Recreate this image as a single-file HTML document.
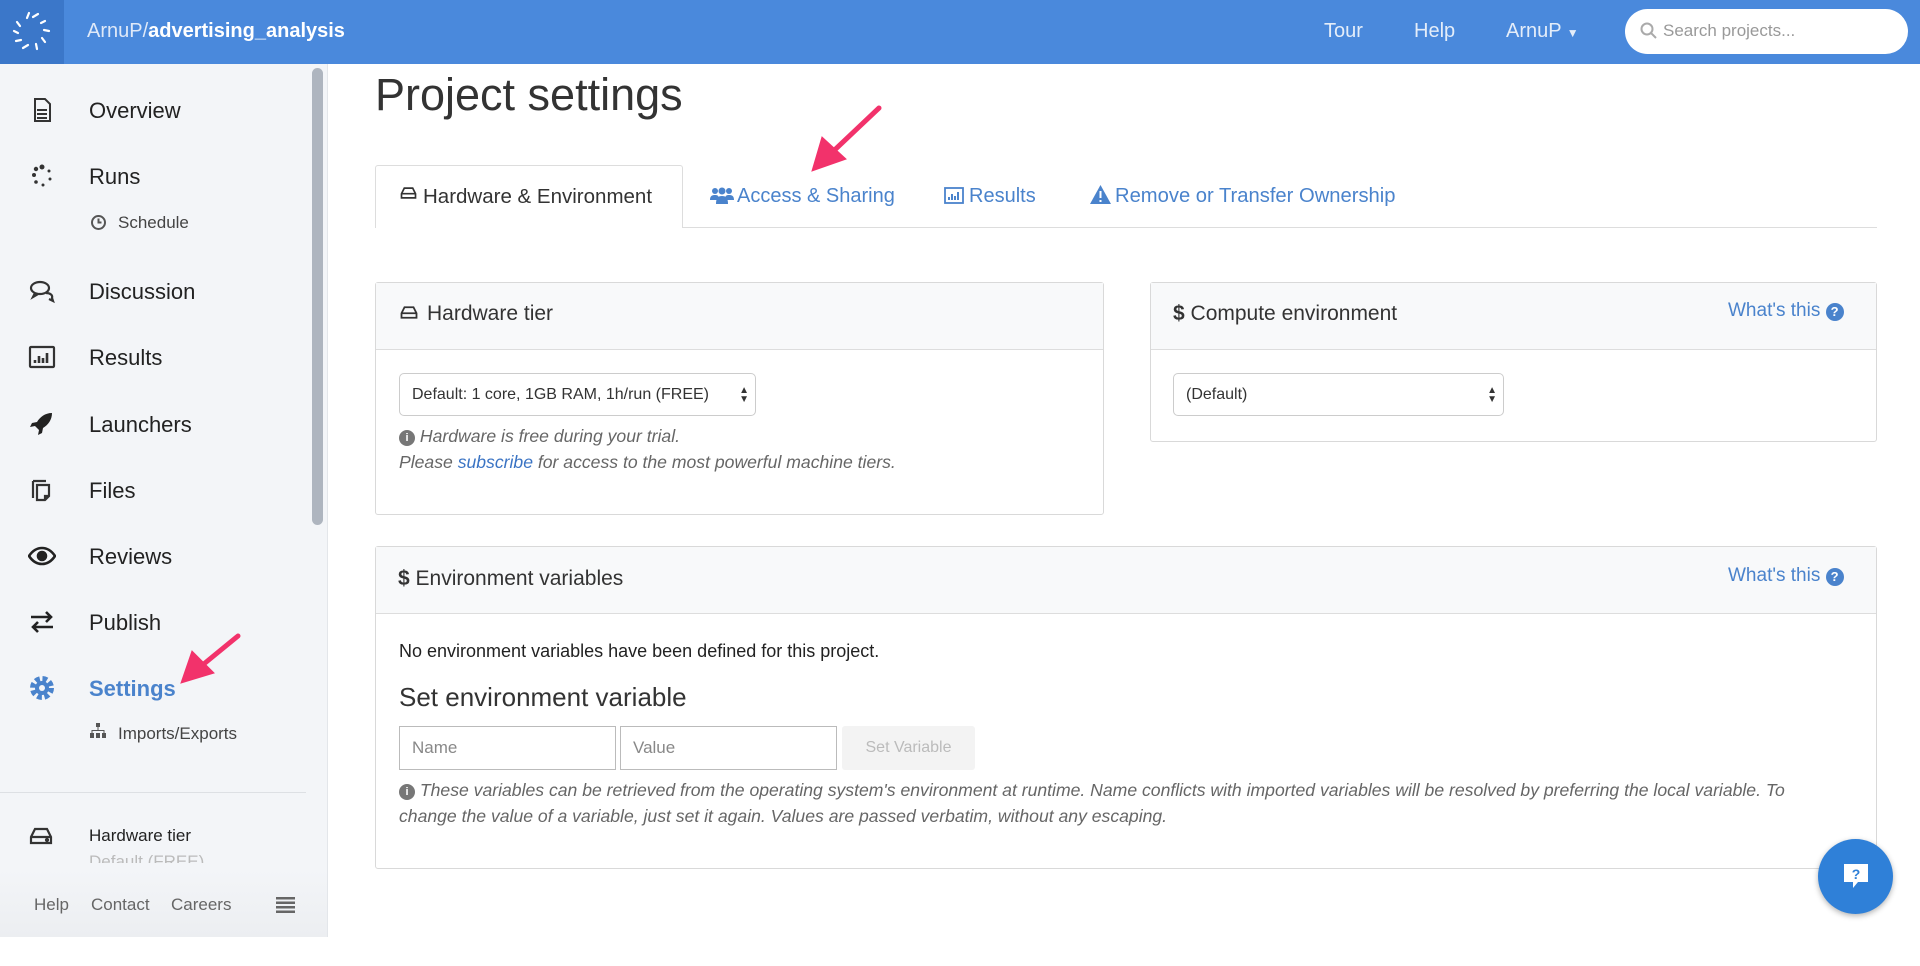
<!DOCTYPE html>
<html><head><meta charset="utf-8"><style>
*{box-sizing:border-box;margin:0;padding:0}
body{width:1920px;height:966px;position:relative;background:#fff;font-family:"Liberation Sans",sans-serif;overflow:hidden;color:#333}
.a{position:absolute;white-space:nowrap}
.hdr{left:0;top:0;width:1920px;height:64px;background:#4a89dc}
.logo{left:0;top:0;width:64px;height:64px;background:#3b77c9}
.side{left:0;top:64px;width:328px;height:873px;background:#f3f5f8;border-right:1px solid #e3e6ea}
.nav{left:89px;font-size:22px;color:#222;transform:translateY(-50%)}
.ic{left:28px;width:28px;height:28px;transform:translateY(-50%)}
.panel{border:1px solid #d9d9d9;border-radius:3px;background:#fff}
.ph{background:#f8f9fa;border-bottom:1px solid #ddd}
.blue{color:#4a83cc}
.sel{border:1px solid #ccc;border-radius:5px;background:#fff;font-size:16px;color:#333;padding-left:12px;line-height:42px}
.note{font-style:italic;font-size:17.6px;color:#666}
</style></head><body>
<div class="a hdr"></div>
<div class="a logo"><svg width="64" height="64" viewBox="0 0 64 64" fill="none" stroke="#fff" stroke-width="2.2" stroke-linecap="round"><g transform="translate(31,32)"><path d="M-4-14l2-5M2-15l5-3M10-9l4-2M13-2l5 1M11 6l3 4M5 12l1 5M-3 13l-5 3M-10 8l-5 1M-13 1l-4-2M-11-6l-3-4"/></g></svg></div>
<div class="a" style="left:87px;top:20px;font-size:20px;color:#dfe9f8">ArnuP/<b style="color:#fff">advertising_analysis</b></div>
<div class="a" style="left:1324px;top:20px;font-size:20px;color:#e4edf9">Tour</div>
<div class="a" style="left:1414px;top:20px;font-size:20px;color:#e4edf9">Help</div>
<div class="a" style="left:1506px;top:20px;font-size:20px;color:#e4edf9">ArnuP <span style="font-size:12px">▼</span></div>
<div class="a" style="left:1625px;top:9px;width:283px;height:45px;background:#fff;border-radius:23px"></div>
<svg class="a" style="left:1640px;top:22px" width="18" height="18" viewBox="0 0 18 18" fill="none" stroke="#aaa" stroke-width="2"><circle cx="7" cy="7" r="5.5"/><path d="M11 11l5 5"/></svg>
<div class="a" style="left:1663px;top:21px;font-size:17px;color:#999">Search projects...</div>

<div class="a side"></div>
<div class="a" style="left:312px;top:68px;width:11px;height:457px;background:#aeb5bf;border-radius:6px"></div>

<svg class="a ic" style="top:110px" viewBox="0 0 28 28" fill="none" stroke="#333" stroke-width="2"><path d="M7 3h10l5 5v17H7z M9 14h10M9 18h10M9 22h10"/></svg>
<div class="a nav" style="top:111px">Overview</div>
<svg class="a ic" style="top:176px" viewBox="0 0 28 28" fill="#333"><circle cx="14" cy="5" r="2.5"/><circle cx="21" cy="9" r="1.5"/><circle cx="22" cy="17" r="1.5"/><circle cx="15" cy="23" r="1.5"/><circle cx="8" cy="20" r="1.8"/><circle cx="6" cy="13" r="2"/><circle cx="8" cy="7" r="2.2"/></svg>
<div class="a nav" style="top:177px">Runs</div>
<svg class="a" style="left:90px;top:214px" width="17" height="17" viewBox="0 0 17 17" fill="none" stroke="#555" stroke-width="2"><circle cx="8.5" cy="8.5" r="6.5"/><path d="M8.5 4.5v4h3"/></svg>
<div class="a" style="left:118px;top:213px;font-size:17px;color:#444">Schedule</div>
<svg class="a ic" style="top:291px" viewBox="0 0 28 28" fill="none" stroke="#333" stroke-width="2.2"><ellipse cx="12" cy="11" rx="9" ry="6"/><path d="M7 16l-2 4 5-3M18 16c4 0 7 2 6 5l1 3-4-2"/></svg>
<div class="a nav" style="top:292px">Discussion</div>
<svg class="a ic" style="top:357px" viewBox="0 0 28 28" fill="none" stroke="#333" stroke-width="2.2"><rect x="2" y="4" width="24" height="20" rx="1"/><path d="M7 20v-3M11 20v-7M15 20v-5M19 20v-10" stroke-width="2.6"/></svg>
<div class="a nav" style="top:358px">Results</div>
<svg class="a ic" style="top:424px" viewBox="0 0 28 28" fill="#222"><path d="M24 3c-7 0-12 4-15 9l-5 1-2 4 5-1 4 4-1 5 4-2 1-5c5-3 9-8 9-15z"/></svg>
<div class="a nav" style="top:425px">Launchers</div>
<svg class="a ic" style="top:490px" viewBox="0 0 28 28" fill="none" stroke="#333" stroke-width="2.2"><path d="M5 5h13M5 5v17M9 9h12v11l-4 4H9zM17 24v-4h4"/></svg>
<div class="a nav" style="top:491px">Files</div>
<svg class="a ic" style="top:556px" viewBox="0 0 28 28" fill="none" stroke="#222" stroke-width="2.6"><path d="M1 14c4-6 9-8 13-8s9 2 13 8c-4 6-9 8-13 8S5 20 1 14z"/><circle cx="14" cy="14" r="4" fill="#222"/></svg>
<div class="a nav" style="top:557px">Reviews</div>
<svg class="a ic" style="top:622px" viewBox="0 0 28 28" fill="none" stroke="#222" stroke-width="2.6"><path d="M3 9h20M18 4l5 5-5 5M25 19H5M10 14l-5 5 5 5"/></svg>
<div class="a nav" style="top:623px">Publish</div>
<svg class="a ic" style="top:688px" viewBox="0 0 28 28"><circle cx="14" cy="14" r="9" fill="none" stroke="#4a83cc" stroke-width="6" stroke-dasharray="4.5 2.6"/><circle cx="14" cy="14" r="7" fill="#4a83cc"/><circle cx="14" cy="14" r="3" fill="#f3f5f8"/></svg>
<div class="a nav" style="top:689px;color:#4a83cc;font-weight:bold">Settings</div>
<svg class="a" style="left:89px;top:723px" width="18" height="16" viewBox="0 0 18 16" fill="#555"><rect x="7" y="0" width="4" height="4"/><rect x="1" y="10" width="4" height="5"/><rect x="7" y="10" width="4" height="5"/><rect x="13" y="10" width="4" height="5"/><path d="M8.5 4h1v3h6v3h-1V8H3.5v2h-1V7h6z"/></svg>
<div class="a" style="left:118px;top:724px;font-size:17px;color:#444">Imports/Exports</div>
<div class="a" style="left:0;top:792px;width:306px;height:1px;background:#dde0e4"></div>
<svg class="a" style="left:29px;top:826px" width="24" height="20" viewBox="0 0 24 20" fill="none" stroke="#333" stroke-width="2.2"><path d="M2 11l4-8h12l4 8v6H2zM2 11h20"/><circle cx="18" cy="14" r="1" fill="#333"/></svg>
<div class="a" style="left:89px;top:826px;font-size:17px;color:#222">Hardware tier</div>
<div class="a" style="left:89px;top:852px;font-size:17px;color:#bbb;height:11px;overflow:hidden;line-height:20px">Default (FREE)</div>
<div class="a" style="left:0;top:870px;width:327px;height:67px;background:linear-gradient(#f3f5f8,#eceef1)"></div>
<div class="a" style="left:34px;top:895px;font-size:17px;color:#666">Help</div>
<div class="a" style="left:91px;top:895px;font-size:17px;color:#666">Contact</div>
<div class="a" style="left:171px;top:895px;font-size:17px;color:#666">Careers</div>
<div class="a" style="left:276px;top:897px;width:19px;height:16px;background:repeating-linear-gradient(#666 0 2.5px,transparent 2.5px 4.5px)"></div>

<div class="a" style="left:375px;top:69px;font-size:45px;color:#333">Project settings</div>
<div class="a" style="left:375px;top:227px;width:1502px;height:1px;background:#ddd"></div>
<div class="a" style="left:375px;top:165px;width:308px;height:63px;background:#fff;border:1px solid #ddd;border-bottom:none;border-radius:3px 3px 0 0"></div>
<svg class="a" style="left:400px;top:186px" width="17" height="14" viewBox="0 0 24 20" fill="none" stroke="#333" stroke-width="2.4"><path d="M2 11l4-8h12l4 8v6H2zM2 11h20"/></svg>
<div class="a" style="left:423px;top:185px;font-size:20.5px;color:#333">Hardware &amp; Environment</div>
<svg class="a" style="left:710px;top:187px" width="24" height="18" viewBox="0 0 24 18" fill="#4a83cc"><circle cx="5" cy="4" r="3"/><circle cx="12" cy="4" r="3.5"/><circle cx="19" cy="4" r="3"/><path d="M0 13c0-4 2-5 5-5s4 1 4 5zM6 17c0-6 2-8 6-8s6 2 6 8zM15 13c0-4 1-5 4-5s5 1 5 5z"/></svg>
<div class="a blue" style="left:737px;top:185px;font-size:20px">Access &amp; Sharing</div>
<svg class="a" style="left:944px;top:187px" width="20" height="17" viewBox="0 0 20 17" fill="none" stroke="#4a83cc" stroke-width="1.8"><rect x="1" y="1" width="18" height="15"/><path d="M5 13v-3M8 13v-6M11 13v-4M14 13v-8" stroke-width="2"/></svg>
<div class="a blue" style="left:969px;top:185px;font-size:20px">Results</div>
<svg class="a" style="left:1090px;top:185px" width="21" height="19" viewBox="0 0 21 19"><path d="M10.5 0L21 19H0z" fill="#4a83cc"/><path d="M10.5 6v7M10.5 15v2" stroke="#fff" stroke-width="2"/></svg>
<div class="a blue" style="left:1115px;top:185px;font-size:20.2px">Remove or Transfer Ownership</div>

<div class="a panel" style="left:375px;top:282px;width:729px;height:233px"><div class="ph" style="height:67px"></div></div>
<svg class="a" style="left:400px;top:305px" width="18" height="15" viewBox="0 0 24 20" fill="none" stroke="#333" stroke-width="2.4"><path d="M2 11l4-8h12l4 8v6H2zM2 11h20"/></svg>
<div class="a" style="left:427px;top:302px;font-size:21px;color:#333">Hardware tier</div>
<div class="a sel" style="left:399px;top:373px;width:357px;height:43px">Default: 1 core, 1GB RAM, 1h/run (FREE) <span style="position:absolute;right:6px;top:0;font-size:10px;line-height:9px;padding-top:12px">▲<br>▼</span></div>
<div class="a note" style="left:399px;top:426px"><span style="display:inline-block;width:16px;height:16px;border-radius:50%;background:#777;color:#fff;font-size:11px;text-align:center;line-height:16px;font-style:normal;font-weight:bold;vertical-align:1px">i</span> Hardware is free during your trial.</div>
<div class="a note" style="left:399px;top:452px">Please <span style="color:#3b74c4">subscribe</span> for access to the most powerful machine tiers.</div>

<div class="a panel" style="left:1150px;top:282px;width:727px;height:160px"><div class="ph" style="height:67px"></div></div>
<div class="a" style="left:1173px;top:302px;font-size:21px;color:#333"><b>$</b> Compute environment</div>
<div class="a blue" style="left:1728px;top:300px;font-size:19px">What's this <span style="display:inline-block;width:18px;height:18px;border-radius:50%;background:#4a83cc;color:#fff;font-size:13px;text-align:center;line-height:18px;font-weight:bold">?</span></div>
<div class="a sel" style="left:1173px;top:373px;width:331px;height:43px">(Default)<span style="position:absolute;right:6px;top:0;font-size:10px;line-height:9px;padding-top:12px">▲<br>▼</span></div>

<div class="a panel" style="left:375px;top:546px;width:1502px;height:323px"><div class="ph" style="height:67px"></div></div>
<div class="a" style="left:398px;top:567px;font-size:21px;color:#333"><b>$</b> Environment variables</div>
<div class="a blue" style="left:1728px;top:565px;font-size:19px">What's this <span style="display:inline-block;width:18px;height:18px;border-radius:50%;background:#4a83cc;color:#fff;font-size:13px;text-align:center;line-height:18px;font-weight:bold">?</span></div>
<div class="a" style="left:399px;top:641px;font-size:18px;color:#222">No environment variables have been defined for this project.</div>
<div class="a" style="left:399px;top:682px;font-size:26px;color:#333">Set environment variable</div>
<div class="a" style="left:399px;top:726px;width:217px;height:44px;border:1px solid #bbb;font-size:17px;color:#888;padding:11px 12px">Name</div>
<div class="a" style="left:620px;top:726px;width:217px;height:44px;border:1px solid #bbb;font-size:17px;color:#888;padding:11px 12px">Value</div>
<div class="a" style="left:842px;top:726px;width:133px;height:44px;background:#f3f3f3;border-radius:3px;font-size:16px;color:#bbb;text-align:center;line-height:44px">Set Variable</div>
<div class="a note" style="left:399px;top:780px"><span style="display:inline-block;width:16px;height:16px;border-radius:50%;background:#777;color:#fff;font-size:11px;text-align:center;line-height:16px;font-style:normal;font-weight:bold;vertical-align:1px">i</span> These variables can be retrieved from the operating system's environment at runtime. Name conflicts with imported variables will be resolved by preferring the local variable. To</div>
<div class="a note" style="left:399px;top:806px">change the value of a variable, just set it again. Values are passed verbatim, without any escaping.</div>

<div class="a" style="left:1818px;top:839px;width:75px;height:75px;border-radius:50%;background:#2f80d8;box-shadow:0 2px 6px rgba(0,0,0,.3)"></div>
<svg class="a" style="left:1841px;top:861px" width="30" height="30" viewBox="0 0 30 30"><path d="M3 3h24v18H17l-5 6v-6H3z" fill="#fff"/><text x="15" y="18" font-size="14" font-weight="bold" fill="#2f80d8" text-anchor="middle" font-family="Liberation Sans">?</text></svg>

<svg class="a" style="left:0;top:0" width="1920" height="966" viewBox="0 0 1920 966"><g fill="#f2326b" stroke="#f2326b" stroke-width="5" stroke-linecap="round"><path d="M879 108L824 160" fill="none"/><path d="M812 171l10-34 24 22z" stroke-width="1"/><path d="M238 636L194 672" fill="none"/><path d="M181 683l11-32 22 22z" stroke-width="1"/></g></svg>
</body></html>
